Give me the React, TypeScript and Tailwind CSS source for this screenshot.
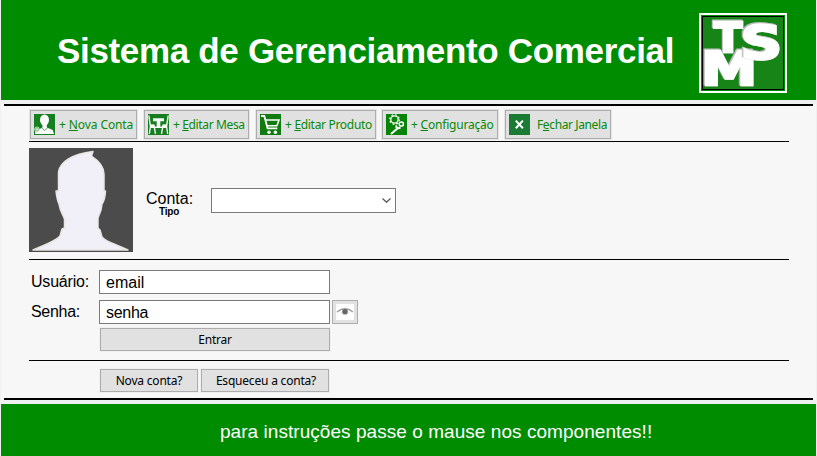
import type { ReactNode } from "react";

function Logo() {
  return (
    <svg className="block h-20 w-22" viewBox="0 0 88 80">
      <path d="M1 1H87V79H1Z" fill="#008c00" stroke="#fff" strokeWidth="2" />
      <path d="M3.5 3.5H84.5V76.5H3.5Z" fill="#178417" stroke="#000" />
      <g
        className="[&>text]:[filter:drop-shadow(.6px_.6px_0_#bdbdbd)_drop-shadow(-.6px_-.6px_0_#bdbdbd)]"
        fontFamily="'DejaVu Sans', sans-serif"
        fontWeight="700"
        fill="#fff"
        stroke="#fff"
        strokeWidth="2.5"
      >
        <text transform="translate(7.3 71.7) scale(1.22 1)" x="-4.2" y="0" fontSize="46">M</text>
        <text transform="translate(45.3 46.2) scale(1.27 1)" x="-3" y="0" fontSize="45.5">S</text>
        <text transform="translate(15 38.8) scale(1.02 1)" x="0" y="0" fontSize="40.5">T</text>
      </g>
    </svg>
  );
}

function Icon({ color, children }: { color: string; children: ReactNode }) {
  return (
    <svg className="block size-[21px] shrink-0" viewBox="0 0 21 21">
      <rect width="21" height="21" fill={color} />
      {children}
    </svg>
  );
}

function AccountIcon() {
  return (
    <Icon color="#148020">
      <ellipse cx="10.5" cy="6" rx="4.5" ry="5.6" fill="#fff" />
      <path d="M8.5 10H12.8V13.5L18.7 16 20 20H1L1.5 17 8.5 13.5Z" fill="#fff" />
      <path d="M7.5 13.8 10.5 16.5 13.7 13.8" fill="none" stroke="#148020" strokeWidth=".7" />
      <circle cx="3" cy="15.3" r="2.4" fill="#77b57d" stroke="#d6ead8" strokeWidth=".7" />
      <path d="M1.8 15.3H4.3M3 14V16.6" stroke="#fff" strokeWidth=".7" />
    </Icon>
  );
}

function TableIcon() {
  return (
    <Icon color="#187c20">
      <path d="M5 4.3H16V7.3H12.3V12.5H14V14H7V12.5H8.7V7.3H5Z" fill="#f5faf5" />
      <path
        d="M.8 1.5 2.3 11.5H6L7.5 20M2.5 12 1.3 20M20.2 1.5 18.7 11.5H15L13.5 20M18.5 12 19.7 20"
        fill="none"
        stroke="#f5faf5"
        strokeWidth="1.4"
      />
      <path d="M2 10.5H6.3V14H2.3ZM14.7 10.5H19V14H14.7Z" fill="#f5faf5" />
    </Icon>
  );
}

function CartIcon() {
  return (
    <Icon color="#107c10">
      <path d="M1 2H4.3L7.6 14.3H17.3" fill="none" stroke="#fff" strokeWidth="1.8" />
      <path d="M5.3 6H19L16.9 11.7H7" fill="none" stroke="#fff" strokeWidth="1.5" />
      <circle cx="9" cy="18.2" r="1.7" fill="#fff" />
      <circle cx="15.4" cy="18.2" r="1.7" fill="#fff" />
    </Icon>
  );
}

function SettingsIcon() {
  return (
    <Icon color="#078407">
      <circle cx="8.5" cy="5.5" r="3.7" fill="none" stroke="#fff" strokeWidth="1.3" />
      <circle cx="8.5" cy="5.5" r="4.8" fill="none" stroke="#fff" strokeWidth="1.2" strokeDasharray="1.8 1.97" />
      <circle cx="15.3" cy="10" r="2.1" fill="none" stroke="#fff" strokeWidth="1.5" />
      <path d="M10.3 11.3C10 14 12 15 14.5 13.4M12 14 5 20" fill="none" stroke="#fff" strokeWidth="2" />
    </Icon>
  );
}

function CloseIcon() {
  return (
    <Icon color="#1a7b34">
      <path d="M6.8 6.6 13.9 14.2M13.9 6.6 6.8 14.2" stroke="#fff" strokeWidth="2" />
    </Icon>
  );
}

function ToolButton({
  icon,
  className,
  textClass,
  children,
}: {
  icon: ReactNode;
  className: string;
  textClass: string;
  children: ReactNode;
}) {
  return (
    <button
      className={`flex h-[29px] shrink-0 items-center border border-[#adadad] bg-[#e1e1e1] pl-[3px] text-[#078a07] outline-1 outline-[#e5e5e5] ${className}`}
    >
      {icon}
      <span className={`block text-left font-['Noto_Sans',sans-serif] text-[12px] leading-[17px] whitespace-nowrap ${textClass}`}>
        {children}
      </span>
    </button>
  );
}

function PushButton({ width, children }: { width: string; children: ReactNode }) {
  return (
    <button
      className={`h-[23px] shrink-0 border border-[#adadad] bg-[#e1e1e1] text-center font-['Noto_Sans',sans-serif] text-[12px] leading-[20px] tracking-[-0.2px] whitespace-nowrap text-black outline-1 outline-[#f0f0f0] ${width}`}
    >
      {children}
    </button>
  );
}

function Avatar() {
  return (
    <svg className="block size-[104px] shrink-0" viewBox="0 0 104 104">
      <rect width="104" height="104" fill="#4b4b4b" />
      <path
        d="M4 102 18 96Q29 91 31 88L33 81 35.5 80V71L31.5 62 30 56Q28 52 27 43H29.5V24C31 14 43 6 64 3.5L62.5 8C70 13 75 18 75 26V43H76.5Q76 52 73 56L72 62 69 70V80L71 82 73 89Q77 93 85 96L99 102Z"
        fill="#f1eff8"
        stroke="#e9e6e3"
        strokeWidth="1.5"
        strokeLinejoin="round"
      />
    </svg>
  );
}

export default function App() {
  return (
    <div className="flex h-[456px] w-[817px] flex-col bg-[#f0f0f0] px-px font-['Liberation_Sans',Arial,sans-serif] text-black">
      <header className="flex h-[100px] shrink-0 items-start bg-[#008c00] pt-[13px] pr-[29px] pl-14">
        <h1 className="mt-[18px] flex-1 text-[35px] leading-10 font-bold tracking-[-0.33px] whitespace-nowrap text-white">
          Sistema de Gerenciamento Comercial
        </h1>
        <Logo />
      </header>

      <main className="mt-1 flex h-[296px] shrink-0 flex-col bg-[#f7f7f7]">
        <div className="mr-[3px] ml-[3px] h-0.5 shrink-0 bg-black" />
        <nav className="mt-1 flex h-[29px] shrink-0 pl-[29px]">
          <ToolButton icon={<AccountIcon />} className="w-[107px]" textClass="ml-1 tracking-[-0.1px]">
            + <u>N</u>ova Conta
          </ToolButton>
          <ToolButton icon={<TableIcon />} className="ml-[7px] w-[105px]" textClass="ml-1 tracking-[-0.36px]">
            + <u>E</u>ditar Mesa
          </ToolButton>
          <ToolButton icon={<CartIcon />} className="ml-[7px] w-[120px]" textClass="ml-1 tracking-[-0.31px]">
            + <u>E</u>ditar Produto
          </ToolButton>
          <ToolButton icon={<SettingsIcon />} className="ml-1.5 w-[116px]" textClass="ml-1 tracking-[-0.2px]">
            + <u>C</u>onfiguração
          </ToolButton>
          <ToolButton icon={<CloseIcon />} className="ml-[7px] w-[106px]" textClass="ml-[7px] tracking-[-0.38px]">
            F<u>e</u>char Janela
          </ToolButton>
        </nav>
        <div className="mt-0.5 mr-[27px] ml-7 h-px shrink-0 bg-black" />

        <section className="mt-1.5 flex h-[104px] shrink-0 pl-7">
          <Avatar />
          <div className="ml-[13px] w-[65px] pt-[42px]">
            <div className="text-[16px] leading-[18px]">Conta:</div>
            <div className="pl-[13px] text-[10px] leading-[7px] font-bold tracking-[-0.2px]">Tipo</div>
          </div>
          <button className="mt-10 flex h-[25px] w-[185px] items-center justify-end border border-[#7a7a7a] bg-white pr-1">
            <svg className="h-[5px] w-[9px]" viewBox="0 0 9 5">
              <path d="M.5.5 4.5 4.3 8.5.5" fill="none" stroke="#555" strokeWidth="1.2" />
            </svg>
          </button>
        </section>
        <div className="mt-[7px] mr-[27px] ml-7 h-px shrink-0 bg-black" />

        <form className="mt-2.5 flex shrink-0 flex-col pl-[30px] text-[16px]">
          <div className="flex h-6">
            <label className="w-[68px] leading-6 tracking-[-0.2px]">Usuário:</label>
            <div className="h-6 w-[231px] border border-[#7a7a7a] bg-white pl-1.5 leading-6">email</div>
          </div>
          <div className="mt-1.5 flex h-6">
            <label className="w-[68px] leading-6 tracking-[-0.3px]">Senha:</label>
            <div className="h-6 w-[231px] border border-[#7a7a7a] bg-white pl-1.5 leading-6 tracking-[-0.3px]">senha</div>
            <div className="ml-0.5 flex h-6 w-[26px] items-center justify-center border border-[#adadad] bg-[#e1e1e1]">
              <svg className="h-4 w-[18px] bg-white" viewBox="0 0 18 16">
                <path d="M1 8Q9 1.5 17 8" fill="none" stroke="#a0a0a0" strokeWidth="1.6" />
                <circle cx="9" cy="7.8" r="2.8" fill="#666" />
                <path d="M4.5 8.3Q9 13 13.5 8.3" fill="none" stroke="#ccc" strokeWidth=".6" />
              </svg>
            </div>
          </div>
          <div className="mt-1 flex pl-[69px]">
            <PushButton width="w-[230px]">Entrar</PushButton>
          </div>
        </form>
        <div className="mt-[9px] mr-[27px] ml-7 h-px shrink-0 bg-black" />
        <div className="mt-2 flex shrink-0 gap-[3px] pl-[99px]">
          <PushButton width="w-[98px]">Nova conta?</PushButton>
          <PushButton width="w-[128px] pl-0.5">Esqueceu a conta?</PushButton>
        </div>
        <div className="mt-1.5 mr-[3px] ml-[3px] h-0.5 shrink-0 bg-black" />
      </main>

      <footer className="mt-1 flex h-[52px] shrink-0 bg-[#008c00] pt-4 pl-[219px] text-[19px] leading-6 tracking-[0.05px] whitespace-nowrap text-white">
        para instruções passe o mause nos componentes!!
      </footer>
    </div>
  );
}
